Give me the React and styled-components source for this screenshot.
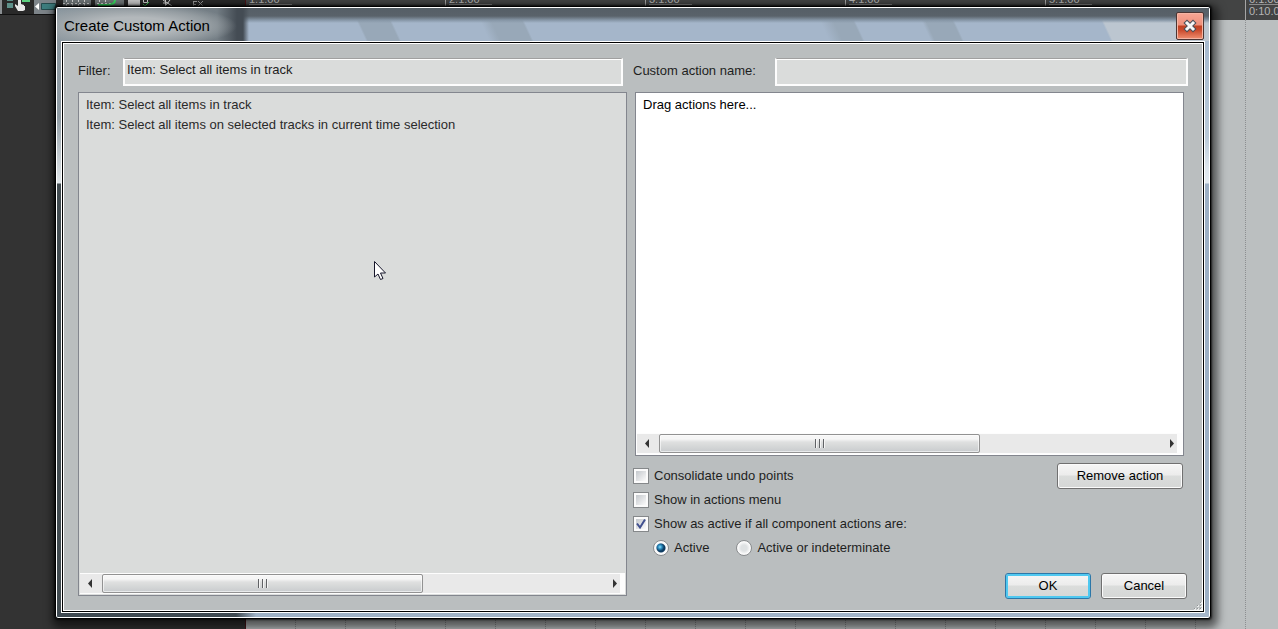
import React, { useState } from 'react';
import styled, { createGlobalStyle } from 'styled-components';

const GlobalStyle = createGlobalStyle`
  * {
    box-sizing: border-box;
  }
  body {
    margin: 0;
    background: #bbbfc0;
    font-family: 'Liberation Sans', Arial, sans-serif;
    font-size: 13px;
    line-height: 16px;
    color: #1e1e1e;
  }
  button,
  input {
    font: inherit;
    color: inherit;
    margin: 0;
  }
`;

const Desktop = styled.div`
  position: relative;
  display: flex;
  min-height: 100vh;
  padding: 6px 67px 10px 55px;
  overflow: hidden;
`;

/* host window behind the dialog */
const Host = styled.div`
  position: absolute;
  inset: 0;
  display: flex;
  overflow: hidden;
`;

const TrackPanel = styled.div`
  flex: 0 0 246px;
  background: #333;
  border-right: 1px solid #4a1418;
`;

const Toolbar = styled.div`
  height: 15px;
  background: #292929;
  border-bottom: 1px solid #111;
  svg {
    display: block;
  }
`;

const Arrange = styled.div`
  flex: 1;
  min-width: 0;
  display: flex;
  flex-direction: column;
`;

const Ruler = styled.div`
  display: flex;
  height: 20px;
  overflow: hidden;
  background: #434444;
`;

const Mark = styled.div`
  flex: 0 0 200px;
  padding-left: 3px;
  border-right: 1px solid #a5a5a5;
  color: #b5b5b5;
  font-size: 11px;
  line-height: 13px;
  span {
    display: block;
    width: 43px;
    height: 12px;
    margin-top: -7px;
    border-bottom: 1px solid #8c8c8c;
  }
`;

const LastMark = styled(Mark)`
  border: 0;
  p {
    margin: 0;
  }
`;

const Grid = styled.div`
  flex: 1;
  background-color: #bbbfc0;
  background-image: repeating-linear-gradient(
      to bottom,
      transparent 0 1px,
      #bbbfc0 1px 2px
    ),
    repeating-linear-gradient(
      to right,
      transparent 0 49px,
      #8c8e90 49px 50px
    );
`;

const Dialog = styled.section`
  position: relative;
  flex: 1;
  min-width: 0;
  display: flex;
  flex-direction: column;
  padding: 0 4px 4px;
  border: 1px solid #000;
  border-radius: 3px;
  background: linear-gradient(
      to right,
      #3f4a52 0 180px,
      #9fb2c6 200px,
      #a5b6ca 100%
    )
    0 100% / 100% 6px no-repeat,
    linear-gradient(
        to bottom,
        #8b979f 0,
        #8f9ba3 110px,
        #c3cbd0 150px,
        #dfe5e8 176px,
        #424c51 177px
      )
      0 0 / 6px 100% no-repeat,
    linear-gradient(
        to bottom,
        #9fb3ca 0,
        #b9c9d8 130px,
        #dde5ec 160px,
        #e3eaf0 176px,
        #9db0c5 177px
      )
      100% 0 / 6px 100% no-repeat,
    #a5b6ca;
  box-shadow: inset 0 0 0 1px #fff, 0 0 2px 1px rgba(0, 0, 0, 0.7),
    2px 4px 9px 5px rgba(0, 0, 0, 0.55);
`;

const TitleBar = styled.header`
  display: flex;
  justify-content: space-between;
  height: 33px;
  margin: 1px -3px 0;
  padding: 0 5px 0 7px;
  background: radial-gradient(
      ellipse 104px 22px at 76px 18px,
      #b3b8bb 40%,
      rgba(160, 167, 171, 0.7) 75%,
      rgba(120, 130, 137, 0) 100%
    ),
    linear-gradient(
      to right,
      #8b979f 0,
      #737d84 160px,
      #444c54 180px,
      #444c54 186px,
      rgba(68, 76, 84, 0) 192px
    ),
    linear-gradient(
      to bottom,
      #555f67 0,
      #59626a 8px,
      #8595a5 12px,
      transparent 15px
    ),
    linear-gradient(
      65deg,
      #a5b6ca 0 280px,
      #98a8b8 282px 310px,
      #a5b6ca 312px 392px,
      #98a8b8 402px 430px,
      #a5b6ca 432px 700px,
      #98a8b8 712px 730px,
      #a5b6ca 732px 792px,
      #98a8b8 796px 820px,
      #a5b6ca 822px 955px,
      #bcc6d0 957px
    );
`;

const Title = styled.h1`
  margin: 0;
  font-size: 15px;
  font-weight: 400;
  line-height: 36px;
  color: #000;
`;

const CloseButton = styled.button`
  display: flex;
  align-items: center;
  justify-content: center;
  width: 28px;
  height: 28px;
  margin-top: 4px;
  padding: 0;
  border: 1px solid #4c3533;
  border-radius: 2px;
  background: linear-gradient(
    #f7a796 0,
    #ee8f7a 12px,
    #c03f20 13px,
    #c9492c 17px,
    #f08f70 100%
  );
  box-shadow: inset 0 0 0 1px #f5b5a4;
`;

const Body = styled.form`
  flex: 1;
  display: grid;
  grid-template-columns: 1fr 1fr;
  margin: 2px 3px 3px;
  padding: 14px;
  border: 1px solid #fff;
  background: #babebf;
  box-shadow: 0 0 0 1px #000, 0 0 0 2px #fff;
`;

const Column = styled.div`
  display: flex;
  flex-direction: column;
  min-width: 0;
`;

const Field = styled.div`
  display: flex;
  align-items: center;
  height: 28px;
  margin-right: ${({ $gap }) => $gap}px;
`;

const FieldLabel = styled.label`
  flex: 0 0 ${({ $width }) => $width}px;
  padding-bottom: 3px;
`;

const TextInput = styled.input`
  flex: 1;
  min-width: 0;
  height: 28px;
  padding: 0 2px 4px;
  border: 2px solid #fdfdfd;
  border-top: 1px solid #a0a0a0;
  box-shadow: inset 0 1px #fff;
  background: #dadcdb;
  outline: none;
`;

const ListBox = styled.div`
  flex: 1;
  display: flex;
  flex-direction: column;
  margin: ${({ $margin }) => $margin};
  padding: 1px;
  border: 1px solid #83868e;
  background: ${({ $background }) => $background};
  color: ${({ $color }) => $color};
`;

const Items = styled.ul`
  flex: 1;
  margin: 0;
  padding: 1px 6px 0;
  list-style: none;
  line-height: 20px;
`;

const ScrollTrack = styled.div`
  display: flex;
  align-items: center;
  height: 21px;
  padding: 0 2px 0 7px;
  border: solid #fdfdfd;
  border-width: 1px 5px 1px 0;
  background: #e9e9e9;
`;

const ScrollThumb = styled.div`
  flex: 0 0 321px;
  display: flex;
  align-items: center;
  justify-content: center;
  height: 19px;
  margin: 0 auto 0 9px;
  border: 1px solid #929292;
  border-radius: 2px;
  background: linear-gradient(
    #f6f6f6 0 4px,
    #dfe0e0 7px,
    #d6d8d8 11px,
    #c8cbce 100%
  );
  box-shadow: inset 0 0 0 1px rgba(255, 255, 255, 0.6);
`;

const Options = styled.div`
  display: flex;
  justify-content: space-between;
  align-items: flex-start;
  margin: 7px 5px 0 0;
`;

const OptionList = styled.div`
  padding-top: 1px;
`;

const OptionRow = styled.div`
  display: flex;
  gap: 27px;
  padding-left: 20px;
`;

const Option = styled.label`
  display: flex;
  align-items: center;
  gap: 5px;
  height: 24px;
`;

const CheckWrap = styled.span`
  position: relative;
  display: flex;
  svg {
    position: absolute;
    inset: 0;
    pointer-events: none;
  }
`;

const CheckBox = styled.input`
  appearance: none;
  width: 16px;
  height: 16px;
  border: 1px solid #85888a;
  background: linear-gradient(135deg, #c8ccd0 20%, #f7f7f7 80%);
  box-shadow: inset 0 0 0 2px #fbfbfb;
`;

const Radio = styled.input`
  appearance: none;
  width: 16px;
  height: 16px;
  border: 1px solid #8a8d8f;
  border-radius: 50%;
  background: radial-gradient(circle at 7px 7px, #dfe2e3 0 3px, #fafafa 6px);
  &:checked {
    background: radial-gradient(
        circle at 6px 6px,
        #8fe0f8 0,
        #2a8cc0 2px,
        transparent 4px
      ),
      radial-gradient(circle at 7px 7px, #0f3c62 0 4px, #fafafa 5px);
  }
`;

const Button = styled.button`
  width: ${({ $width }) => $width}px;
  height: 26px;
  padding: 0;
  border: 1px solid ${({ $primary }) => ($primary ? '#2c77a8' : '#707070')};
  border-radius: 3px;
  background: linear-gradient(
    #f6f6f6 0,
    #ececec 11px,
    #dbdddc 12px,
    #d5d7d6 100%
  );
  box-shadow: inset 0 0 0
    ${({ $primary }) => ($primary ? '2px #4fc8f0' : '1px #fbfbfb')};
  color: #000;
`;

const Actions = styled.div`
  display: flex;
  justify-content: flex-end;
  gap: 10px;
  margin: 13px 1px -3px 0;
`;

const Grip = styled.svg`
  position: absolute;
  right: 8px;
  bottom: 8px;
`;

const Cursor = styled.svg`
  position: absolute;
  left: 374px;
  top: 261px;
  pointer-events: none;
`;

const Arrow = ({ right }) => (
  <svg width="6" height="9" viewBox="0 0 6 9">
    <path d={right ? 'M1 0l4 4.500-4 4.500z' : 'M5 0L1 4.500l4 4.500z'} fill="#333" />
  </svg>
);

const ScrollBar = () => (
  <ScrollTrack>
    <Arrow />
    <ScrollThumb>
      <svg width="12" height="9" viewBox="0 0 12 9">
        <path d="M1.500 0v9M5.500 0v9M9.500 0v9" stroke="#606265" />
        <path d="M2.500 0v9M6.500 0v9M10.500 0v9" stroke="#f5f5f5" />
      </svg>
    </ScrollThumb>
    <Arrow right />
  </ScrollTrack>
);

const Check = ({ label, checked, onChange }) => (
  <Option>
    <CheckWrap>
      <CheckBox type="checkbox" checked={checked} onChange={onChange} />
      {checked && (
        <svg width="16" height="16" viewBox="0 0 16 16">
          <path
            d="M4 7.500L7 11.500L12 3.500"
            fill="none"
            stroke="#41508f"
            strokeWidth="2"
          />
        </svg>
      )}
    </CheckWrap>
    {label}
  </Option>
);

const HostToolbar = () => (
  <Toolbar>
    <svg width="245" height="14" viewBox="0 0 245 14">
      <path d="M0 0h2v14H0z" fill="#8a8f92" />
      <path d="M7 0h6v1H7zM7 3h6v5H7z" fill="#5d9089" />
      <path d="M22 0h8v2h-8z" fill="#5cd080" />
      <path d="M18 0h3v4l3 1v1h1v4l-2 1h-5l-3-5v-2l3 2z" fill="#e8e8e8" />
      <path d="M34 0h22v14H34z" fill="#7d8489" />
      <path d="M39 3v7l-4-3.500z" fill="#fff" />
      <path d="M41.500 3.500h14v6h-14z" fill="#3d7d7e" stroke="#254b4d" />
      <path d="M63 0h28v6H63zM95 0h29v6H95z" fill="#6f7678" />
      <path
        d="M63 3.500h28M66.500 0v6M72.500 0v6M78.500 0v6M84.500 0v6M97 3.500h14M99.500 0v6M105.500 0v6"
        stroke="#d8d8d8"
        strokeDasharray="2 2"
      />
      <path d="M98 5h8c6 0 9-1 9-5" fill="none" stroke="#36e060" strokeWidth="2" />
      <path d="M128 0h12v6h-12z" fill="#c8c8c8" />
      <path d="M143.500 0v2.500h4V0" fill="none" stroke="#ccc" />
      <path d="M143 4l2 2 4-4" fill="none" stroke="#3fce55" />
      <path d="M163 0l9 6M165.500 0v6M170 0l-4 5M163 3h6" stroke="#d0d0d0" />
      <path d="M193 1.500h4M193.500 1v5M193 4.500h3M198 1l5 5M203 1l-5 5" stroke="#999" />
    </svg>
  </Toolbar>
);

const marks = ['1.1.00', '2.1.00', '3.1.00', '4.1.00', '5.1.00'];

export default function App() {
  const [filter, setFilter] = useState('Item: Select all items in track');
  const [name, setName] = useState('');
  const [flags, setFlags] = useState({ undo: false, menu: false, active: true });
  const [mode, setMode] = useState('active');
  const toggle = (key) => () => setFlags({ ...flags, [key]: !flags[key] });

  return (
    <Desktop>
      <GlobalStyle />
      <Host>
        <TrackPanel>
          <HostToolbar />
        </TrackPanel>
        <Arrange>
          <Ruler>
            {marks.map((mark) => (
              <Mark key={mark}>
                <span>{mark}</span>
              </Mark>
            ))}
            <LastMark>
              <span>6.1.00</span>
              <p>0:10.000</p>
            </LastMark>
          </Ruler>
          <Grid />
        </Arrange>
      </Host>
      <Dialog role="dialog" aria-labelledby="title">
        <TitleBar>
          <Title id="title">Create Custom Action</Title>
          <CloseButton type="button" aria-label="Close">
            <svg width="16" height="14" viewBox="0 0 16 14">
              <path
                d="M5 4l6 6M11 4l-6 6"
                stroke="#4a4f58"
                strokeWidth="5"
                strokeLinecap="square"
              />
              <path
                d="M5 4l6 6M11 4l-6 6"
                stroke="#f6f6f6"
                strokeWidth="3"
                strokeLinecap="square"
              />
            </svg>
          </CloseButton>
        </TitleBar>
        <Body onSubmit={(e) => e.preventDefault()}>
          <Column>
            <Field $gap={10}>
              <FieldLabel htmlFor="filter" $width={45}>
                Filter:
              </FieldLabel>
              <TextInput
                id="filter"
                value={filter}
                onChange={(e) => setFilter(e.target.value)}
              />
            </Field>
            <ListBox $margin="6px 6px 0 0" $background="#dadcdb" $color="#2a2a2a">
              <Items>
                <li>Item: Select all items in track</li>
                <li>Item: Select all items on selected tracks in current time selection</li>
              </Items>
              <ScrollBar />
            </ListBox>
          </Column>
          <Column>
            <Field $gap={0}>
              <FieldLabel htmlFor="name" $width={142}>
                Custom action name:
              </FieldLabel>
              <TextInput id="name" value={name} onChange={(e) => setName(e.target.value)} />
            </Field>
            <ListBox $margin="6px 4px 0 2px" $background="#fff" $color="#000">
              <Items>
                <li>Drag actions here...</li>
              </Items>
              <ScrollBar />
            </ListBox>
            <Options>
              <OptionList>
                <Check
                  label="Consolidate undo points"
                  checked={flags.undo}
                  onChange={toggle('undo')}
                />
                <Check
                  label="Show in actions menu"
                  checked={flags.menu}
                  onChange={toggle('menu')}
                />
                <Check
                  label="Show as active if all component actions are:"
                  checked={flags.active}
                  onChange={toggle('active')}
                />
                <OptionRow>
                  <Option>
                    <Radio
                      type="radio"
                      name="mode"
                      checked={mode === 'active'}
                      onChange={() => setMode('active')}
                    />
                    Active
                  </Option>
                  <Option>
                    <Radio
                      type="radio"
                      name="mode"
                      checked={mode === 'any'}
                      onChange={() => setMode('any')}
                    />
                    Active or indeterminate
                  </Option>
                </OptionRow>
              </OptionList>
              <Button type="button" $width={126}>
                Remove action
              </Button>
            </Options>
            <Actions>
              <Button type="submit" $width={86} $primary>
                OK
              </Button>
              <Button type="button" $width={86}>
                Cancel
              </Button>
            </Actions>
          </Column>
        </Body>
        <Grip width="9" height="9" viewBox="0 0 9 9">
          <path
            d="M7 1h2v2H7zM4 4h2v2H4zM7 4h2v2H7zM1 7h2v2H1zM4 7h2v2H4zM7 7h2v2H7z"
            fill="#e8eaea"
          />
          <path
            d="M7 1h1v1H7zM4 4h1v1H4zM7 4h1v1H7zM1 7h1v1H1zM4 7h1v1H4zM7 7h1v1H7z"
            fill="#909495"
          />
        </Grip>
      </Dialog>
      <Cursor width="13" height="20" viewBox="0 0 13 20">
        <path
          d="M.5 .5v15.500l3.500-3 2.500 5.500 2.500-1-2.500-5.500h5z"
          fill="#fff"
          stroke="#16162a"
        />
      </Cursor>
    </Desktop>
  );
}
